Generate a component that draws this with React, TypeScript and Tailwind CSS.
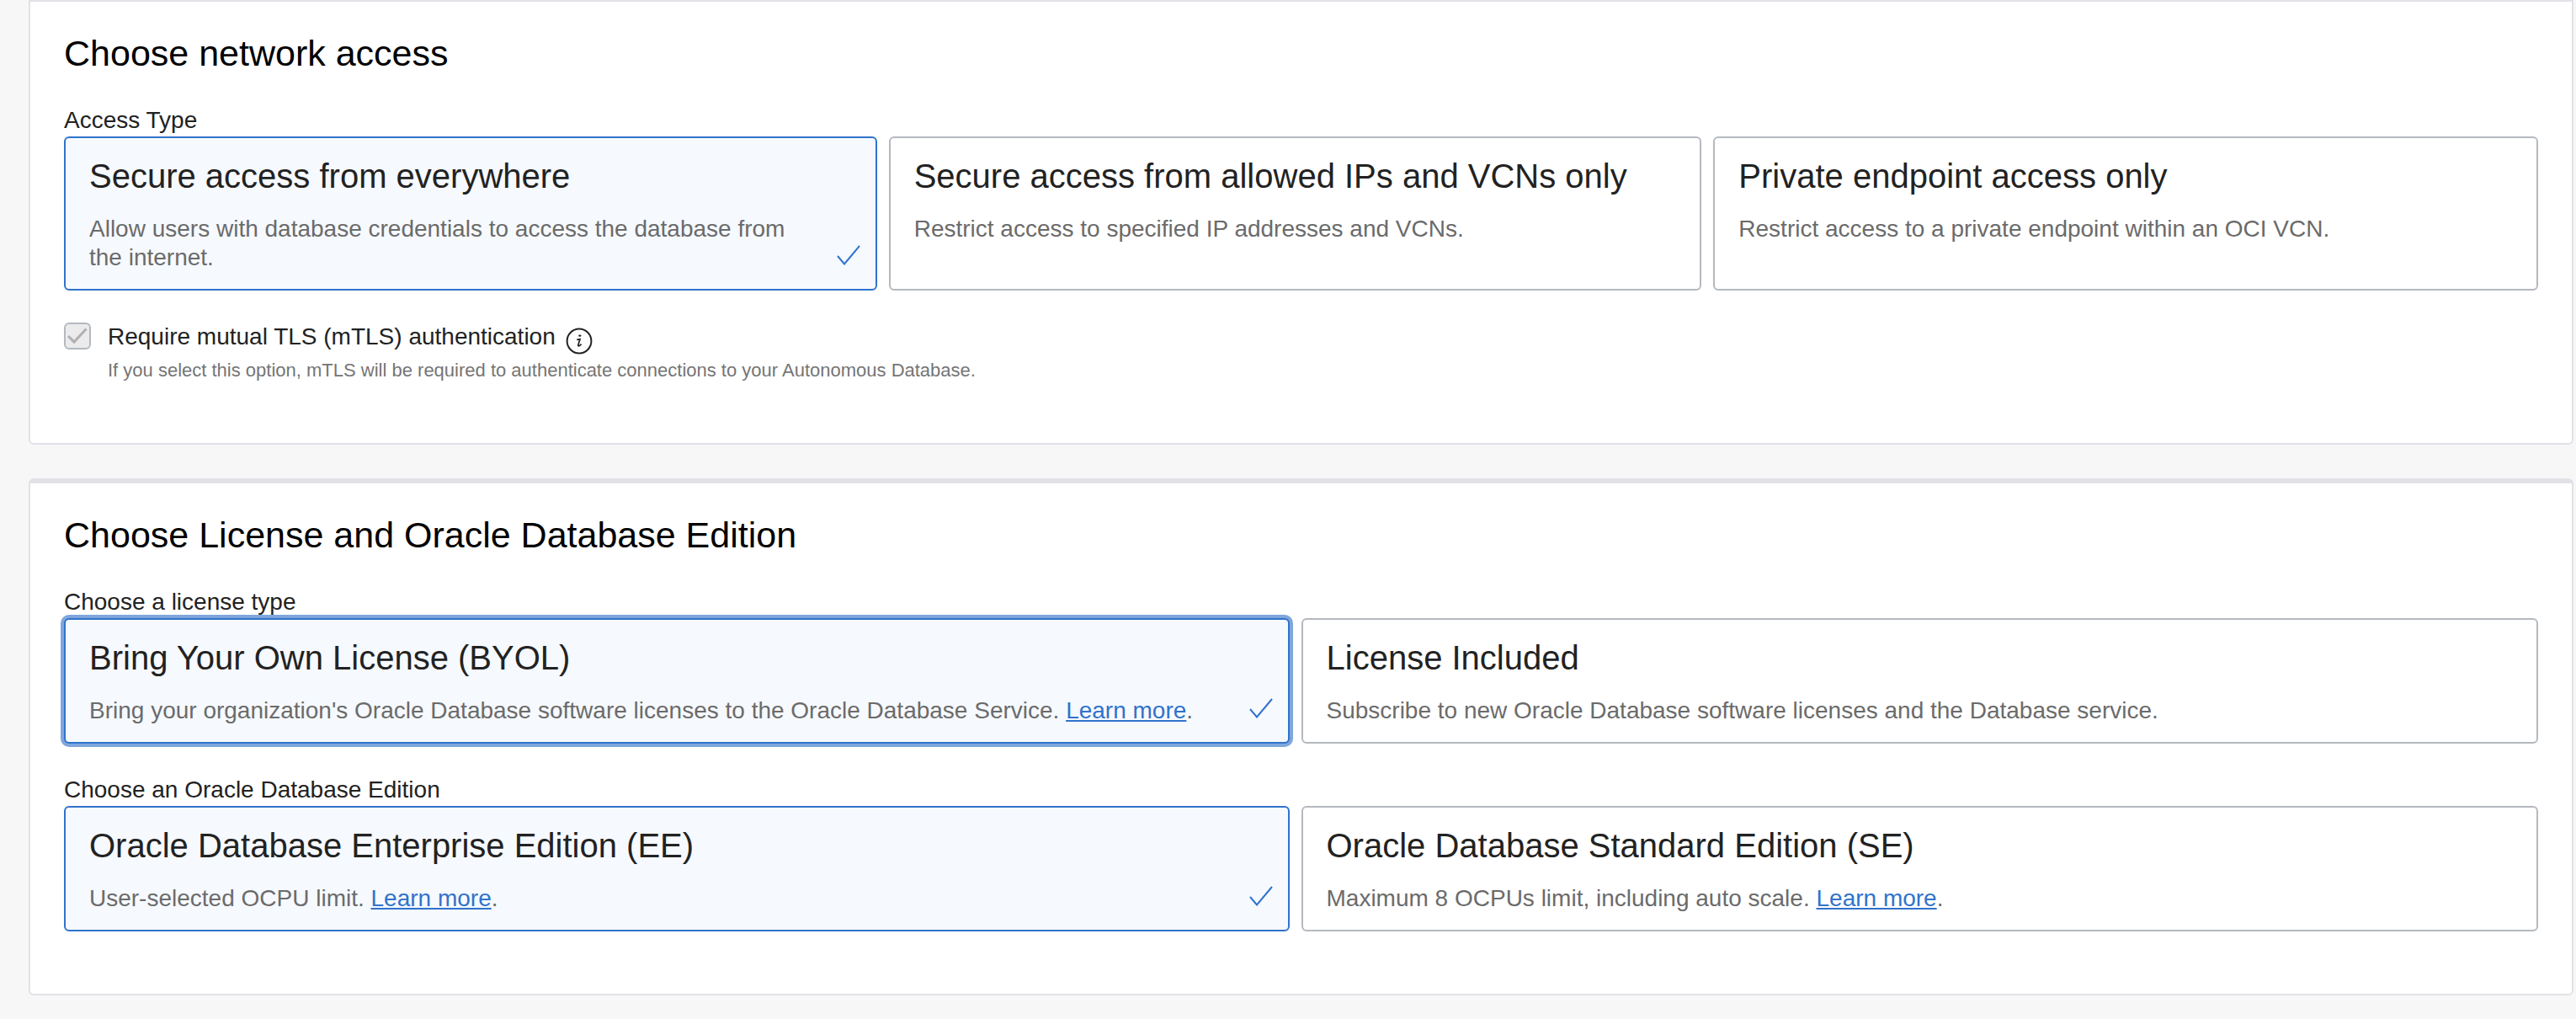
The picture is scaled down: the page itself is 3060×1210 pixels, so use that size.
import { useState, type ReactNode } from "react";

type Option = { id: string; title: string; body: ReactNode };

function LearnMore() {
  return (
    <a href="#learn-more" className="text-[#3073cb] underline decoration-2 underline-offset-2">
      Learn more
    </a>
  );
}

function OptionCard({
  name,
  option,
  selected,
  focused,
  onSelect,
}: {
  name: string;
  option: Option;
  selected: boolean;
  focused: boolean;
  onSelect: () => void;
}) {
  return (
    <div
      className={`relative h-full rounded-md border-2 pt-5 pr-[72px] pb-5 pl-7 ${
        selected ? "border-[#3073cb] bg-[#f6f9fe]" : "border-[#b4b9bf] bg-white"
      } ${focused ? "ring-4 ring-[#7fa6dd]" : ""}`}
    >
      <input
        type="radio"
        id={option.id}
        name={name}
        checked={selected}
        onChange={onSelect}
        className="sr-only"
      />
      <label htmlFor={option.id} className="block cursor-pointer text-[40px] leading-[50px] text-[#222]">
        {option.title}
      </label>
      <p className="mt-[21px] text-[28px] leading-[34px] text-[#6b6b6b]">{option.body}</p>
      {selected && (
        <svg
          aria-hidden="true"
          viewBox="0 0 28 24"
          className="absolute right-[18px] bottom-7 h-6 w-7 fill-none stroke-[#3073cb] stroke-2"
        >
          <path d="M1 13 9 22.5 27 1" />
        </svg>
      )}
    </div>
  );
}

function OptionGroup({
  legend,
  name,
  options,
  columns,
  focusedId,
}: {
  legend: string;
  name: string;
  options: Option[];
  columns: string;
  focusedId?: string;
}) {
  const [selected, setSelected] = useState(options[0].id);
  return (
    <fieldset>
      <legend className="text-[28px] leading-[38px] text-[#222]">{legend}</legend>
      <div className={`grid ${columns}`}>
        {options.map((option) => (
          <div key={option.id} className="pr-3.5 last:pr-0">
            <OptionCard
              name={name}
              option={option}
              selected={selected === option.id}
              focused={selected === option.id && focusedId === option.id}
              onSelect={() => setSelected(option.id)}
            />
          </div>
        ))}
      </div>
    </fieldset>
  );
}

function Heading({ children }: { children: ReactNode }) {
  return <h2 className="mb-9 text-[43px] leading-[50px] text-black">{children}</h2>;
}

const accessTypes: Option[] = [
  {
    id: "access-everywhere",
    title: "Secure access from everywhere",
    body: "Allow users with database credentials to access the database from the internet.",
  },
  {
    id: "access-allowed",
    title: "Secure access from allowed IPs and VCNs only",
    body: "Restrict access to specified IP addresses and VCNs.",
  },
  {
    id: "access-private",
    title: "Private endpoint access only",
    body: "Restrict access to a private endpoint within an OCI VCN.",
  },
];

const licenses: Option[] = [
  {
    id: "license-byol",
    title: "Bring Your Own License (BYOL)",
    body: (
      <>
        Bring your organization's Oracle Database software licenses to the Oracle Database Service. <LearnMore />.
      </>
    ),
  },
  {
    id: "license-included",
    title: "License Included",
    body: "Subscribe to new Oracle Database software licenses and the Database service.",
  },
];

const editions: Option[] = [
  {
    id: "edition-ee",
    title: "Oracle Database Enterprise Edition (EE)",
    body: (
      <>
        User-selected OCPU limit. <LearnMore />.
      </>
    ),
  },
  {
    id: "edition-se",
    title: "Oracle Database Standard Edition (SE)",
    body: (
      <>
        Maximum 8 OCPUs limit, including auto scale. <LearnMore />.
      </>
    ),
  },
];

export default function App() {
  return (
    <main className="flex min-h-screen flex-col gap-10 bg-[#f7f7f7] pr-[3px] pb-7 pl-[34px] font-['Liberation_Sans',Arial,sans-serif]">
      <section className="rounded-b-md border-2 border-[#e1e2e7] bg-white px-10 pt-9 pb-[71px]">
        <Heading>Choose network access</Heading>
        <OptionGroup legend="Access Type" name="access" options={accessTypes} columns="grid-cols-3" />
        <div className="mt-[38px] flex gap-5">
          <div className="relative size-8 shrink-0">
            <input
              type="checkbox"
              id="mtls"
              checked
              disabled
              readOnly
              aria-describedby="mtls-hint"
              className="block size-8 appearance-none rounded-md border-2 border-[#b4b9bf] bg-[#ebebeb]"
            />
            <svg
              aria-hidden="true"
              viewBox="0 0 32 32"
              className="pointer-events-none absolute inset-0 size-8 fill-none stroke-[#b0b0b0] stroke-3"
            >
              <path d="M5 16 12 23 26.5 7.5" />
            </svg>
          </div>
          <div>
            <div className="flex gap-3">
              <label htmlFor="mtls" className="text-[28px] leading-[34px] text-[#222]">
                Require mutual TLS (mTLS) authentication
              </label>
              <button type="button" aria-label="More information" className="mt-1.5 -mb-1.5 size-8">
                <svg viewBox="0 0 32 32" className="size-8 fill-none stroke-[#222] stroke-2">
                  <circle cx="16" cy="16" r="14.4" />
                  <ellipse cx="16.8" cy="9.6" rx="1.7" ry="1.2" className="fill-[#222] stroke-none" />
                  <path
                    d="M13.2 14.4 17 13.8 14.8 20.4C14.2 22.4 15.8 22.4 18.6 19.6"
                    className="stroke-[1.7]"
                  />
                </svg>
              </button>
            </div>
            <p id="mtls-hint" className="mt-2 text-[22px] leading-[30px] text-[#757575]">
              If you select this option, mTLS will be required to authenticate connections to your Autonomous Database.
            </p>
          </div>
        </div>
      </section>

      <section className="rounded-md border-2 border-t-[6px] border-[#e1e2e7] bg-white px-10 pt-9 pb-[74px]">
        <Heading>Choose License and Oracle Database Edition</Heading>
        <div className="flex flex-col gap-9">
          <OptionGroup
            legend="Choose a license type"
            name="license"
            options={licenses}
            columns="grid-cols-2"
            focusedId="license-byol"
          />
          <OptionGroup
            legend="Choose an Oracle Database Edition"
            name="edition"
            options={editions}
            columns="grid-cols-2"
          />
        </div>
      </section>
    </main>
  );
}
